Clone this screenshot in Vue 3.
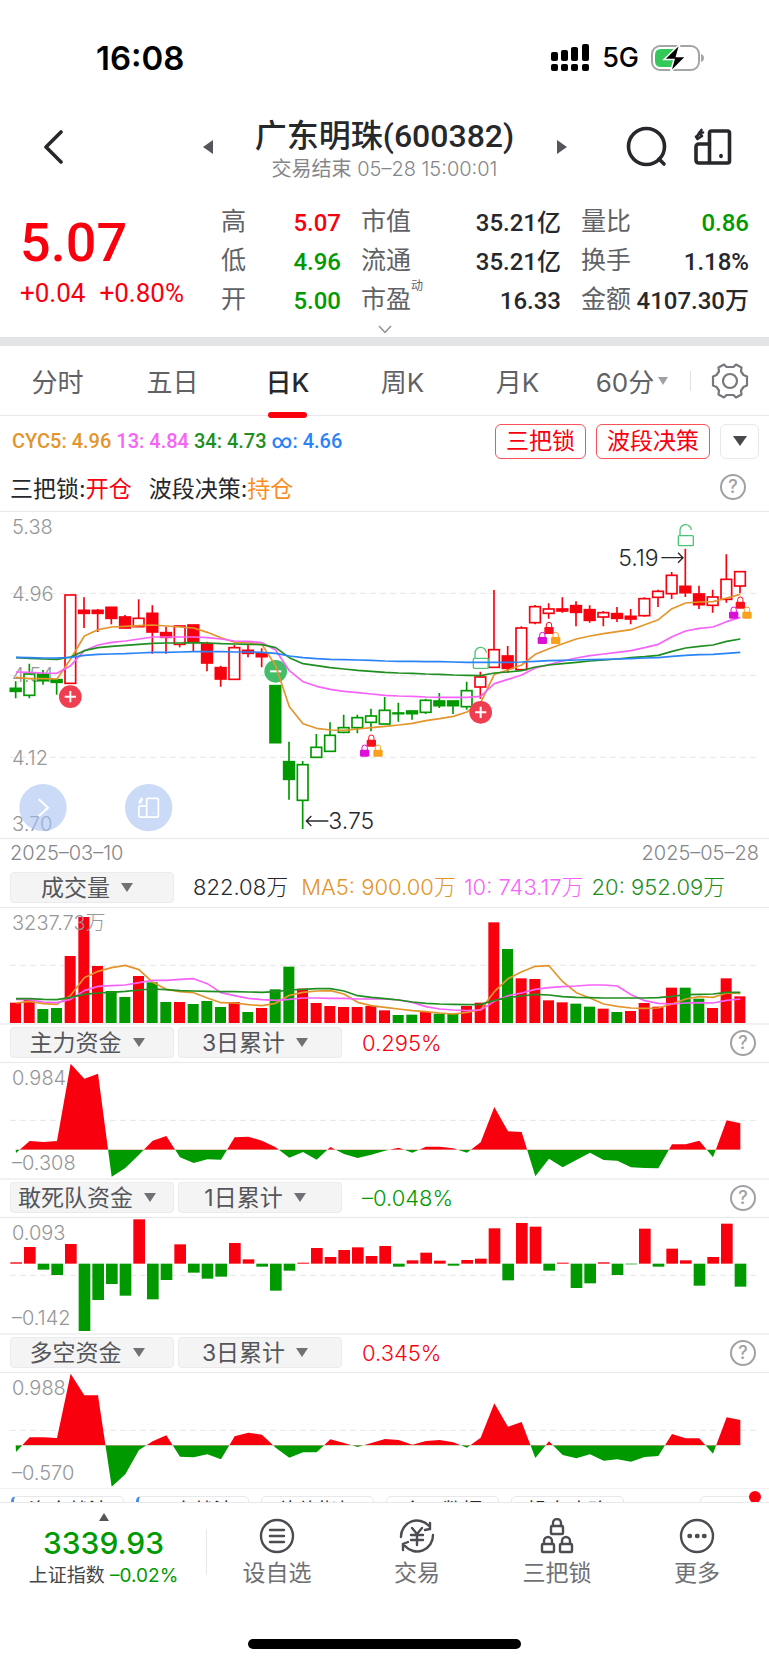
<template>
  <div class="stock-page">
    <div class="status-bar">
      <span class="clock">16:08</span>
      <div class="status-right">
        <svg class="signal" viewBox="0 0 40 28" aria-hidden="true">
          <g fill="#000">
            <rect x="1" y="8" width="7" height="9" rx="2" />
            <rect x="11" y="6" width="7" height="11" rx="2" />
            <rect x="21" y="3" width="7" height="14" rx="2" />
            <rect x="32" y="0" width="7" height="17" rx="2" />
            <rect v-for="x in [1, 11, 21, 32]" :key="x" :x="x" y="20" width="7" height="7" rx="2" />
          </g>
        </svg>
        <span class="network">5G</span>
        <svg class="battery" viewBox="0 0 54 28" aria-hidden="true">
          <rect x="1" y="2" width="47" height="24" rx="8" fill="#fff" stroke="#a5a5a5" stroke-width="2" />
          <path d="M10 5 H24 V23 H10 Q4 23 4 17 V11 Q4 5 10 5Z" fill="#34c759" />
          <path d="M50 10 Q53 11 53 14 Q53 17 50 18Z" fill="#a5a5a5" />
          <path d="M29 0 L13 15.500 H23 L19.500 28 L35 12.500 H25.500Z" fill="#000" stroke="#fff" stroke-width="1.500" />
        </svg>
      </div>
    </div>

    <header class="title-bar">
      <button class="icon-btn back" aria-label="返回">
        <svg width="22" height="34" viewBox="0 0 22 34"><path d="M19 2 L4 17 L19 32" fill="none" stroke="#26282c" stroke-width="3.600" stroke-linecap="round" stroke-linejoin="round" /></svg>
      </button>
      <button class="icon-btn" aria-label="上一只">
        <svg width="12" height="16" viewBox="0 0 12 16"><path d="M1 8 L11 1 V15Z" fill="#55565a" /></svg>
      </button>
      <div class="title">
        <h1>广东明珠(600382)</h1>
        <p>交易结束 <span>05–28 15:00:01</span></p>
      </div>
      <button class="icon-btn" aria-label="下一只">
        <svg width="12" height="16" viewBox="0 0 12 16"><path d="M11 8 L1 1 V15Z" fill="#55565a" /></svg>
      </button>
      <div class="title-tools">
        <button class="icon-btn" aria-label="搜索">
          <svg width="42" height="42" viewBox="0 0 42 42" fill="none" stroke="#26282c" stroke-width="3.600" stroke-linecap="round">
            <circle cx="20.500" cy="20.500" r="18" />
            <path d="M33 33 L38 38" />
          </svg>
        </button>
        <button class="icon-btn" aria-label="横屏">
          <svg width="38" height="38" viewBox="0 0 38 38" fill="none" stroke="#26282c" stroke-width="3.600" stroke-linejoin="round" stroke-linecap="round">
            <use href="#rotate-icon" />
          </svg>
        </button>
      </div>
    </header>

    <svg class="defs" aria-hidden="true">
      <defs>
        <g id="rotate-icon">
          <rect x="15.500" y="3" width="20" height="32" rx="2" />
          <path d="M15.500 16 H5 Q2 16 2 19 V32 Q2 35 5 35 H15.500" />
          <path d="M3 10.500 Q3 4.500 9 4.500 M7.500 2 L5 5 L8 8 M2 8.500 L3.500 11 L6.500 9" stroke-width="2.600" />
          <path d="M27 27.500 V28.500" />
        </g>
        <g id="lock">
          <path d="M-8 -2 V-10 A8 8 0 0 1 8 -10 V-2" fill="none" stroke="currentColor" stroke-width="3" />
          <rect x="-14" y="-4" width="28" height="21" rx="4" fill="currentColor" />
        </g>
        <g id="trio">
          <use href="#lock" x="0" y="-14" class="lock-red" />
          <use href="#lock" x="-20" y="16" class="lock-purple" />
          <use href="#lock" x="20" y="16" class="lock-orange" />
        </g>
        <g id="open-lock" fill="none" stroke="#4fc473" stroke-width="4">
          <rect x="-22" y="0" width="45" height="30" rx="3" />
          <path d="M-17 0 V-15 A17 17 0 0 1 17 -17" />
        </g>
      </defs>
    </svg>

    <section class="quote">
      <div class="quote-price">
        <strong>5.07</strong>
        <div class="change"><span>+0.04</span><span>+0.80%</span></div>
      </div>
      <dl v-for="(col, i) in quoteCols" :key="i" class="quote-col">
        <div v-for="row in col" :key="row.label">
          <dt>{{ row.label }}<sup v-if="row.sup">{{ row.sup }}</sup></dt>
          <dd :class="row.tone">{{ row.value }}</dd>
        </div>
      </dl>
    </section>
    <button class="expand" aria-label="展开">
      <svg width="14" height="9" viewBox="0 0 14 9"><path d="M1 1 L7 7.500 L13 1" fill="none" stroke="#8e8f92" stroke-width="1.500" /></svg>
    </button>

    <nav class="tabs">
      <button v-for="tab in tabs" :key="tab" :class="{ active: tab === activeTab }" @click="activeTab = tab">{{ tab }}</button>
      <button class="minute">60分<svg width="12" height="8" viewBox="0 0 12 8"><path d="M1 0 H11 L6 8Z" fill="#a0a1a4" /></svg></button>
      <button class="settings" aria-label="设置">
        <svg width="38" height="38" viewBox="-19 -19 38 38" fill="none" stroke="#77787b" stroke-width="2.200" stroke-linejoin="round">
          <path d="M-3.500 -14 L-6 -16.500 L-11.500 -13.500 L-11 -9.500 L-13.500 -6 L-17 -4.500 V4.500 L-13.500 6 L-11 9.500 L-11.500 13.500 L-6 16.500 L-3.500 14 H3.500 L6 16.500 L11.500 13.500 L11 9.500 L13.500 6 L17 4.500 V-4.500 L13.500 -6 L11 -9.500 L11.500 -13.500 L6 -16.500 L3.500 -14Z" />
          <circle r="7" />
        </svg>
      </button>
    </nav>

    <div class="indicators">
      <div class="cyc">
        <span class="orange">CYC5: 4.96</span>
        <span class="pink">13: 4.84</span>
        <span class="dark-green">34: 4.73</span>
        <span class="blue">∞: 4.66</span>
      </div>
      <div class="strategy">
        <button>三把锁</button>
        <button>波段决策</button>
        <button class="more" aria-label="更多指标"><svg width="14" height="10" viewBox="0 0 14 10"><path d="M0 0 H14 L7 10Z" fill="#47484c" /></svg></button>
      </div>
    </div>
    <div class="signals">
      <span>三把锁:<b class="red">开仓</b></span>
      <span>波段决策:<b class="amber">持仓</b></span>
      <button class="help" aria-label="说明">?</button>
    </div>

    <div class="k-chart">
      <svg viewBox="0 6 2307 978">
        <path class="grid-line" d="M30 250 H2274 M30 496 H2274 M30 742 H2274" />
        <g class="axis">
          <text x="36" y="72">5.38</text>
          <text x="36" y="272">4.96</text>
          <text x="36" y="517">4.54</text>
          <text x="36" y="764">4.12</text>
          <text x="36" y="962">3.70</text>
        </g>
        <g v-for="(c, i) in candles" :key="i" :stroke="c.color" stroke-width="5">
          <path :d="`M${c.x} ${c.high} V${c.top} M${c.x} ${c.bottom} V${c.low}`" />
          <rect :x="c.x - 16" :y="c.top" width="32" :height="c.bottom - c.top" :fill="c.hollow ? 'none' : c.color" />
        </g>
        <g class="float-btn">
          <circle cx="129" cy="893" r="71" />
          <path d="M116 867 L144 893 L116 919" />
          <circle cx="446" cy="893" r="71" />
          <g transform="translate(413 860) scale(1.750)" stroke-width="3"><use href="#rotate-icon" /></g>
        </g>
        <use href="#open-lock" x="1442" y="445" />
        <use href="#open-lock" x="2057" y="77" />
        <circle cx="827" cy="484" r="34" fill="#43bd68" />
        <path d="M810 484 H844" stroke="#fff" stroke-width="6" />
        <polyline class="line orange" :points="linePoints(kLines.orange)" />
        <polyline class="line pink" :points="linePoints(kLines.pink)" />
        <polyline class="line dark-green" :points="linePoints(kLines.green)" />
        <polyline class="line blue" :points="linePoints(kLines.blue)" />
        <g v-for="p in buyPoints" :key="p.x" :transform="`translate(${p.x} ${p.y})`">
          <circle r="34" fill="#ef3e50" />
          <path d="M-17 0 H17 M0 -17 V17" stroke="#fff" stroke-width="6" />
        </g>
        <use v-for="p in lockPoints" :key="p.x" href="#trio" :x="p.x" :y="p.y" />
        <g class="mark">
          <path d="M985 933 H920 M934 918 L919 933 L934 948" />
          <text x="985" y="958">3.75</text>
          <path d="M1984 143 H2048 M2034 128 L2049 143 L2034 158" />
          <text x="1976" y="168" text-anchor="end">5.19</text>
        </g>
      </svg>
    </div>
    <div class="dates"><span>2025–03–10</span><span>2025–05–28</span></div>

    <section class="panel first">
      <div class="panel-head">
        <button class="picker">成交量<i></i></button>
        <div class="legend">
          <span>822.08万</span>
          <span class="orange">MA5: 900.00万</span>
          <span class="pink">10: 743.17万</span>
          <span class="dark-green">20: 952.09万</span>
        </div>
      </div>
      <svg viewBox="0 204 2307 345">
        <path class="grid-line" d="M30 376 H2274" />
        <rect v-for="(v, i) in volumes" :key="i" :x="30 + 41 * i" :y="v.y" width="33" :height="549 - v.y" :fill="v.color" />
        <polyline class="line orange" :points="linePoints(volLines.orange)" />
        <polyline class="line pink" :points="linePoints(volLines.pink)" />
        <polyline class="line dark-green" :points="linePoints(volLines.green)" />
        <text class="axis" x="36" y="271">3237.73万</text>
      </svg>
    </section>

    <section v-for="p in panels" :key="p.name" class="panel">
      <div class="panel-head">
        <button class="picker">{{ p.name }}<i></i></button>
        <button class="picker">{{ p.period }}<i></i></button>
        <span class="value" :class="p.tone">{{ p.value }}</span>
        <button class="help" aria-label="说明">?</button>
      </div>
      <svg :viewBox="`0 ${p.origin} 2307 345`">
        <path class="grid-line" :d="`M30 ${p.origin + 172} H2274`" />
        <template v-if="p.type === 'area'">
          <clipPath :id="`up-${p.origin}`"><rect x="0" :y="p.origin" width="2307" :height="p.zero - p.origin" /></clipPath>
          <clipPath :id="`down-${p.origin}`"><rect x="0" :y="p.zero" width="2307" height="200" /></clipPath>
          <polygon :points="areaPoints(p)" :fill="GREEN" :clip-path="`url(#down-${p.origin})`" />
          <polygon :points="areaPoints(p)" :fill="RED" :clip-path="`url(#up-${p.origin})`" />
        </template>
        <template v-else>
          <rect
            v-for="(y, i) in p.data"
            :key="i"
            :x="31 + 41 * i"
            :y="Math.min(y, p.zero)"
            width="35"
            :height="Math.abs(y - p.zero)"
            :fill="y < p.zero ? RED : GREEN"
          />
        </template>
        <g class="axis">
          <text x="36" :y="p.origin + 66">{{ p.max }}</text>
          <text x="36" :y="p.origin + 321">{{ p.min }}</text>
        </g>
      </svg>
    </section>

    <div class="chips">
      <button v-for="(chip, i) in chips" :key="chip" :class="{ vip: i < 2 }">{{ chip }}</button>
      <button class="last" aria-label="设置指标"><i class="dot"></i></button>
    </div>

    <footer class="bottom-bar">
      <div class="index">
        <svg width="10" height="8" viewBox="0 0 10 8"><path d="M5 0 L10 8 H0Z" fill="#55565a" /></svg>
        <strong>3339.93</strong>
        <p>上证指数 <span class="green">–0.02%</span></p>
      </div>
      <button class="nav-item">
        <svg viewBox="0 0 36 36">
          <circle cx="18" cy="18" r="16" />
          <path d="M11 12 H25 M11 18 H25 M11 24 H25" />
        </svg>
        设自选
      </button>
      <button class="nav-item">
        <svg viewBox="0 0 36 36">
          <path d="M2 19 A16 16 0 0 1 30 8 M31 5 V11 L26 12" />
          <path d="M34 17 A16 16 0 0 1 6 28 M4 32 V26 L9 24" />
          <path d="M13 10 L18 16 L23 10 M18 16 V27 M12 17 H24 M12 22 H24" />
        </svg>
        交易
      </button>
      <button class="nav-item">
        <svg viewBox="0 0 36 36">
          <g v-for="p in [[18, 9], [9, 27], [27, 27]]" :key="p[0]" :transform="`translate(${p[0]} ${p[1]})`">
            <rect x="-6" y="-1" width="12" height="8" rx="1" />
            <path d="M-4 -1 V-4 A4 4 0 0 1 4 -4 V-1" />
          </g>
        </svg>
        三把锁
      </button>
      <button class="nav-item">
        <svg viewBox="0 0 36 36">
          <circle cx="18" cy="18" r="16" />
          <path d="M10.500 18 H11 M18 18 H18.500 M25 18 H25.500" stroke-width="4.500" />
        </svg>
        更多
      </button>
    </footer>
    <div class="home-bar"></div>
  </div>
</template>

<script setup>
import { ref } from 'vue'

const RED = '#f9000f'
const GREEN = '#009a00'

const tabs = ['分时', '五日', '日K', '周K', '月K']
const activeTab = ref('日K')
const chips = ['资金战法', '三大战法', '估值指标', '今日数据', '操盘攻略']

const quoteCols = [
  [
    { label: '高', value: '5.07', tone: 'red' },
    { label: '低', value: '4.96', tone: 'green' },
    { label: '开', value: '5.00', tone: 'green' }
  ],
  [
    { label: '市值', value: '35.21亿' },
    { label: '流通', value: '35.21亿' },
    { label: '市盈', sup: '动', value: '16.33' }
  ],
  [
    { label: '量比', value: '0.86', tone: 'green' },
    { label: '换手', value: '1.18%' },
    { label: '金额', value: '4107.30万' }
  ]
]

// kind, body top, body bottom, wick high, wick low. Upper case kind = hollow body
const candles = [
  ['g', 535, 544, 514, 565], ['G', 492, 556, 461, 565], ['g', 493, 512, 480, 524], ['g', 509, 517, 509, 554],
  ['R', 255, 520, 255, 520], ['r', 301, 310, 262, 354], ['r', 301, 310, 297, 366], ['r', 292, 325, 292, 343],
  ['r', 321, 354, 315, 354], ['R', 325, 350, 268, 350], ['r', 310, 366, 286, 431], ['r', 368, 382, 350, 431],
  ['R', 348, 403, 348, 412], ['r', 345, 397, 345, 423], ['r', 401, 459, 395, 484], ['r', 473, 507, 467, 530],
  ['R', 413, 508, 405, 508], ['r', 421, 430, 404, 442], ['r', 430, 440, 415, 472], ['g', 527, 698, 527, 698],
  ['g', 755, 808, 695, 869], ['G', 764, 871, 753, 957], ['G', 712, 742, 672, 742], ['G', 676, 724, 637, 724],
  ['G', 653, 667, 614, 670], ['G', 623, 653, 614, 670], ['G', 618, 637, 596, 664], ['G', 601, 642, 561, 642],
  ['g', 609, 611, 578, 635], ['g', 603, 611, 603, 629], ['G', 571, 607, 566, 612], ['g', 573, 587, 549, 594],
  ['g', 573, 587, 573, 612], ['G', 542, 590, 515, 599], ['R', 501, 531, 485, 566], ['R', 419, 472, 240, 472],
  ['r', 438, 475, 408, 488], ['R', 354, 479, 349, 479], ['R', 290, 338, 285, 343], ['R', 297, 310, 280, 326],
  ['r', 297, 303, 262, 308], ['r', 287, 307, 274, 349], ['r', 299, 331, 286, 338], ['R', 308, 321, 303, 349],
  ['r', 311, 325, 291, 336], ['r', 319, 327, 297, 343], ['R', 266, 317, 262, 320], ['R', 244, 262, 239, 291],
  ['R', 196, 251, 186, 267], ['r', 229, 248, 116, 261], ['r', 252, 284, 227, 297], ['R', 261, 286, 239, 308],
  ['R', 208, 268, 133, 278], ['R', 185, 228, 185, 250]
].map(([kind, top, bottom, high, low], i) => ({
  x: 47 + 41 * i,
  top,
  bottom,
  high,
  low,
  hollow: kind === kind.toUpperCase(),
  color: kind.toLowerCase() === 'r' ? RED : GREEN
}))

const kLines = {
  orange: [
    502, 506, 506, 507, 447, 378, 359, 351, 349, 347, 345, 348, 351, 354, 367, 383, 397, 398, 404, 467, 590, 641, 655, 660, 661, 657, 653,
    649, 645, 640, 632, 626, 619, 606, 578, 493, 480, 465, 433, 416, 401, 387, 378, 371, 365, 359, 344, 329, 296, 279, 276, 275, 264, 253
  ],
  pink: [
    486, 487, 489, 490, 467, 422, 405, 397, 393, 387, 381, 381, 381, 381, 383, 387, 393, 394, 398, 420, 482, 515, 529, 538, 544, 548, 552,
    556, 558, 559, 561, 562, 562, 562, 559, 521, 508, 495, 474, 464, 453, 444, 437, 432, 427, 422, 413, 403, 380, 363, 355, 351, 335, 322
  ],
  green: [
    443, 445, 447, 448, 441, 422, 413, 409, 406, 403, 400, 399, 399, 398, 399, 401, 402, 403, 404, 413, 443, 461, 467, 473, 477, 481, 484,
    487, 489, 490, 492, 493, 495, 496, 497, 489, 486, 482, 471, 465, 461, 457, 453, 450, 447, 443, 440, 436, 424, 414, 409, 405, 394, 387
  ],
  blue: [
    442, 443, 444, 444, 442, 436, 433, 432, 431, 429, 427, 427, 426, 425, 425, 425, 426, 426, 427, 430, 438, 443, 446, 448, 449, 450, 451,
    453, 454, 454, 455, 455, 456, 457, 457, 457, 457, 456, 454, 452, 451, 450, 449, 448, 447, 446, 444, 443, 439, 436, 434, 433, 430, 427
  ]
}

const buyPoints = [{ x: 211, y: 560 }, { x: 1442, y: 607 }]
const lockPoints = [{ x: 1114, y: 707 }, { x: 1647, y: 369 }, { x: 2221, y: 293 }]

const volumeTops = [
  488, 480, 507, 504, 348, 231, 378, 453, 471, 408, 427, 486, 486, 492, 483, 501, 486, 516, 504, 448, 380, 446, 489, 498, 501, 501, 498,
  511, 525, 524, 516, 521, 521, 498, 488, 247, 327, 415, 417, 481, 487, 491, 500, 506, 516, 513, 489, 500, 443, 443, 476, 504, 415, 469
]
const volumeKinds = 'rrggrrrggrggrggg' + 'rgrggrrrrrrrggrggrrrgrrrrggrgrrrrggrrr'
const volumes = volumeTops.map((y, i) => ({ y, color: volumeKinds[i] === 'r' ? RED : GREEN }))

const volLines = {
  orange: [
    489, 484, 491, 493, 466, 413, 394, 383, 376, 389, 427, 448, 455, 458, 474, 488, 489, 494, 497, 490, 466, 457, 453, 452, 462, 487, 497,
    502, 507, 512, 515, 519, 522, 517, 509, 455, 416, 395, 379, 377, 425, 458, 474, 492, 499, 504, 505, 504, 492, 477, 470, 472, 459, 460
  ],
  pink: [
    478, 479, 486, 488, 478, 452, 439, 437, 435, 428, 421, 421, 418, 416, 431, 458, 467, 475, 479, 481, 478, 474, 474, 475, 475, 477, 477,
    477, 480, 487, 500, 507, 510, 512, 510, 484, 467, 459, 448, 443, 440, 438, 435, 435, 438, 464, 482, 490, 492, 489, 488, 489, 481, 477
  ],
  green: [
    476, 476, 478, 479, 472, 463, 459, 457, 454, 450, 447, 449, 452, 453, 454, 455, 455, 456, 457, 455, 450, 448, 446, 446, 453, 467, 472,
    476, 480, 486, 490, 492, 493, 494, 493, 481, 473, 468, 463, 465, 470, 472, 473, 474, 474, 474, 474, 473, 469, 464, 463, 462, 457, 457
  ]
}

const panels = [
  {
    name: '主力资金', period: '3日累计', value: '0.295%', tone: 'red', type: 'area', origin: 39, zero: 299, max: '0.984', min: '–0.308',
    data: [
      309, 273, 276, 273, 41, 86, 71, 380, 354, 314, 272, 258, 322, 339, 328, 329, 262, 260, 272, 292, 323, 306, 329, 291, 312, 324, 314,
      302, 293, 308, 290, 290, 295, 308, 277, 171, 244, 246, 379, 326, 352, 330, 308, 330, 332, 352, 354, 355, 283, 283, 272, 322, 211, 220
    ]
  },
  {
    name: '敢死队资金', period: '1日累计', value: '–0.048%', tone: 'green', type: 'bar', origin: 504, zero: 641, max: '0.093', min: '–0.142',
    data: [
      637, 591, 659, 675, 582, 843, 750, 702, 737, 508, 748, 690, 583, 668, 686, 680, 579, 628, 650, 722, 662, 638, 594, 621, 600, 592, 618,
      588, 650, 631, 608, 632, 647, 630, 626, 535, 691, 519, 530, 662, 638, 714, 700, 637, 675, 643, 536, 650, 596, 631, 707, 621, 521, 710
    ]
  },
  {
    name: '多空资金', period: '3日累计', value: '0.345%', tone: 'red', type: 'area', origin: 159, zero: 376, max: '0.988', min: '–0.570',
    data: [
      396, 352, 352, 354, 161, 226, 226, 500, 463, 390, 364, 346, 410, 412, 403, 418, 349, 338, 344, 383, 413, 397, 397, 358, 369, 381, 369,
      357, 360, 374, 363, 360, 367, 383, 353, 250, 320, 306, 414, 364, 405, 415, 403, 422, 418, 425, 411, 408, 342, 355, 355, 401, 292, 300
    ]
  }
]

function linePoints(values) {
  return values.map((y, i) => `${48 + 41 * i},${y}`).join(' ')
}

function areaPoints(panel) {
  return `47,${panel.zero} ${linePoints(panel.data)} 2221,${panel.zero}`
}
</script>

<style>
body {
  margin: 0;
  background: #fff;
}
</style>

<style scoped>
.stock-page {
  font-family: Inter, 'Noto Sans CJK SC', sans-serif;
  color: #26282c;
  overflow: hidden;
}

button {
  font: inherit;
  color: inherit;
  background: none;
  border: 0;
  padding: 0;
  cursor: pointer;
}

svg {
  display: block;
}

.defs {
  position: absolute;
  width: 0;
  height: 0;
}

.red { color: #f9000f; }
.green { color: #009a00; }
.dark-green { color: #1f8f22; }
.orange { color: #e3952b; }
.pink { color: #f763f8; }
.blue { color: #2a83f7; }
.amber { color: #fb8c1e; }

.status-bar {
  display: flex;
  justify-content: space-between;
  align-items: center;
  height: 115px;
  padding: 0 64px 0 96px;
  box-sizing: border-box;
  color: #000;
}

.clock {
  font-size: 33px;
  font-weight: 600;
}

.status-right {
  display: flex;
  align-items: center;
  gap: 12px;
}

.signal {
  width: 40px;
  height: 28px;
}

.network {
  font-size: 27px;
  font-weight: 500;
}

.battery {
  width: 54px;
  height: 28px;
}

.title-bar {
  display: grid;
  grid-template-columns: 1fr 12px 342px 12px 1fr;
  align-items: center;
  height: 66px;
  padding: 0 37px;
  margin: -3px 0 26px;
}

.icon-btn {
  display: flex;
}

.back {
  margin-left: 5px;
}

.title {
  padding-top: 4px;
  text-align: center;
}

.title h1 {
  margin: 0;
  font: 500 32px/40px Roboto, 'Noto Sans CJK SC', sans-serif;
}

.title p {
  margin: 0;
  font-size: 20px;
  line-height: 26px;
  color: #85868a;
}

.title p span {
  font-weight: 300;
}

.title-tools {
  display: flex;
  align-items: center;
  justify-content: flex-end;
  gap: 26px;
}

.quote {
  display: grid;
  grid-template-columns: 181px 120px 1fr 168px;
  column-gap: 20px;
  height: 118px;
  padding: 0 20px;
  font-family: Roboto, 'Noto Sans CJK SC', sans-serif;
}

.quote-price {
  color: #f9000f;
  padding-top: 10px;
}

.quote-price strong {
  display: block;
  font-size: 54px;
  line-height: 58px;
  font-weight: 500;
}

.change {
  display: flex;
  gap: 14px;
  font-size: 26px;
  line-height: 42px;
}

.quote-col {
  margin: 0;
}

.quote-col div {
  display: flex;
  justify-content: space-between;
  height: 39px;
  line-height: 36px;
  font-size: 25px;
  white-space: nowrap;
}

.quote-col dt {
  position: relative;
  color: #616266;
}

.quote-col sup {
  position: absolute;
  left: 100%;
  top: -6px;
  font-size: 12px;
  line-height: 20px;
}

.quote-col dd {
  margin: 0;
  font-size: 24px;
  line-height: 38px;
  font-weight: 500;
}

.expand {
  display: flex;
  justify-content: center;
  align-items: center;
  width: 100%;
  height: 15px;
}

.tabs {
  display: grid;
  grid-template-columns: repeat(6, 115fr) 79fr;
  height: 79px;
  border-top: 9px solid #e3e4e6;
  border-bottom: 1px solid #e8e8ea;
  box-sizing: border-box;
  font-size: 26px;
  color: #616266;
}

.tabs button {
  position: relative;
}

.tabs .active {
  font-weight: 500;
  color: #26282c;
}

.tabs .active::after {
  content: '';
  position: absolute;
  left: 50%;
  bottom: -3px;
  width: 39px;
  height: 6px;
  margin-left: -20px;
  border-radius: 3px;
  background: #f9000f;
}

.tabs .minute {
  display: flex;
  align-items: center;
  justify-content: center;
  gap: 3px;
}

.tabs .settings {
  display: flex;
  align-items: center;
  justify-content: center;
}

.tabs .settings::before {
  content: '';
  position: absolute;
  left: 0;
  height: 20px;
  border-left: 1px solid #e0e0e2;
}

.indicators {
  display: flex;
  justify-content: space-between;
  align-items: center;
  height: 50px;
  padding: 0 10px 0 12px;
}

.cyc {
  display: flex;
  gap: 5px;
  font: 500 20px/30px Roboto, sans-serif;
}

.strategy {
  display: flex;
  gap: 10px;
}

.strategy button {
  height: 35px;
  padding: 0 10px;
  border: 1px solid #f9505a;
  border-radius: 6px;
  font-size: 23px;
  line-height: 30px;
  color: #f9000f;
}

.strategy .more {
  display: flex;
  align-items: center;
  justify-content: center;
  width: 39px;
  padding: 0;
  border-color: #e8e8ea;
}

.signals {
  display: flex;
  align-items: center;
  gap: 17px;
  height: 41px;
  padding: 0 23px 4px 10px;
  border-bottom: 1px solid #e8e8ea;
  font-size: 23px;
}

.signals b {
  font-weight: 400;
}

.help {
  flex: none;
  width: 26px;
  height: 26px;
  margin-left: auto;
  border: 2px solid #a0a1a4;
  border-radius: 50%;
  font-size: 18px;
  line-height: 20px;
  font-weight: 500;
  color: #a0a1a4;
}

.k-chart {
  border-bottom: 1px solid #e8e8ea;
}

.k-chart svg,
.panel > svg {
  width: 100%;
  height: auto;
}

.grid-line {
  stroke: #e6e6e8;
  stroke-width: 3;
  stroke-dasharray: 18 12;
}

.axis {
  font-size: 60px;
  font-weight: 300;
  fill: #96979a;
}

.line {
  fill: none;
  stroke: currentColor;
  stroke-width: 5;
  stroke-linejoin: round;
}

.lock-red { color: #f9101c; }
.lock-purple { color: #dc0fd6; }
.lock-orange { color: #f9a11c; }

.float-btn circle {
  fill: #a3c0f1;
  fill-opacity: 0.58;
}

.float-btn path,
.float-btn g {
  fill: none;
  stroke: #fff;
}

.float-btn > path {
  stroke-width: 6;
}

.mark {
  font-size: 69px;
  font-weight: 300;
  fill: #26282c;
}

.mark path {
  fill: none;
  stroke: #26282c;
  stroke-width: 4;
}

.dates {
  display: flex;
  justify-content: space-between;
  height: 29px;
  padding: 0 10px;
  font-size: 20px;
  line-height: 29px;
  font-weight: 300;
  color: #85868a;
}

.panel-head {
  display: flex;
  align-items: center;
  gap: 4px;
  height: 40px;
  padding: 0 13px 2px 10px;
  border-top: 2px solid #f2f2f3;
  border-bottom: 1px solid #e8e8ea;
  box-sizing: border-box;
}

.first .panel-head {
  border-top-color: transparent;
}

.picker {
  display: flex;
  align-items: center;
  justify-content: center;
  gap: 11px;
  flex: none;
  width: 164px;
  height: 31px;
  padding-right: 10px;
  border: 1px solid #ebebed;
  border-radius: 4px;
  background: #f4f4f5;
  font-size: 23px;
  line-height: 28px;
  color: #55565a;
  box-sizing: border-box;
}

.picker i {
  border: 6px solid transparent;
  border-top: 9px solid #707174;
  border-bottom: 0;
}

.legend {
  display: flex;
  flex: 1;
  gap: 8px;
  margin-left: 15px;
  font-size: 22px;
  line-height: 26px;
  padding-bottom: 2px;
  font-weight: 300;
  white-space: nowrap;
}

.legend span:first-child {
  margin-right: 5px;
}

.value {
  margin-left: 16px;
  font-size: 22px;
  font-weight: 300;
}

.chips {
  display: flex;
  gap: 12px;
  height: 15px;
  padding: 7px 11px 0;
  border-top: 1px solid #f2f2f3;
  border-bottom: 1px solid #e8e8ea;
  box-sizing: border-box;
  overflow: hidden;
}

.chips button {
  flex: none;
  width: 113px;
  height: 30px;
  border: 1px solid #e8e8ea;
  border-radius: 5px;
  font-size: 20px;
  line-height: 26px;
  box-sizing: border-box;
}

.chips .vip {
  border-left: 3px solid #4f8bea;
}

.chips .last {
  position: relative;
  width: 58px;
  margin-left: auto;
}

.dot {
  position: absolute;
  top: -6px;
  right: -4px;
  width: 12px;
  height: 12px;
  border-radius: 50%;
  background: #f9000f;
}

.bottom-bar {
  display: grid;
  grid-template-columns: 207px repeat(4, 1fr);
  height: 88px;
  padding: 10px 2px 0 0;
}

.index {
  position: relative;
  display: flex;
  flex-direction: column;
  align-items: center;
}

.index::after {
  content: '';
  position: absolute;
  right: 0;
  top: 16px;
  height: 46px;
  border-right: 1px solid #e8e8ea;
}

.index strong {
  margin-top: 5px;
  font-size: 30px;
  line-height: 34px;
  font-weight: 500;
  color: #009a00;
}

.index p {
  margin: 2px 0 0;
  font-size: 19px;
  line-height: 28px;
  white-space: nowrap;
  color: #45464a;
}

.nav-item {
  display: flex;
  flex-direction: column;
  align-items: center;
  padding-top: 5px;
  font-size: 23px;
  line-height: 38px;
  color: #707174;
}

.nav-item svg {
  width: 36px;
  height: 36px;
  fill: none;
  stroke: #4c4d52;
  stroke-width: 2.4;
  stroke-linecap: round;
}

.home-bar {
  width: 273px;
  height: 10px;
  margin: 38px auto 16px;
  border-radius: 5px;
  background: #000;
}
</style>
